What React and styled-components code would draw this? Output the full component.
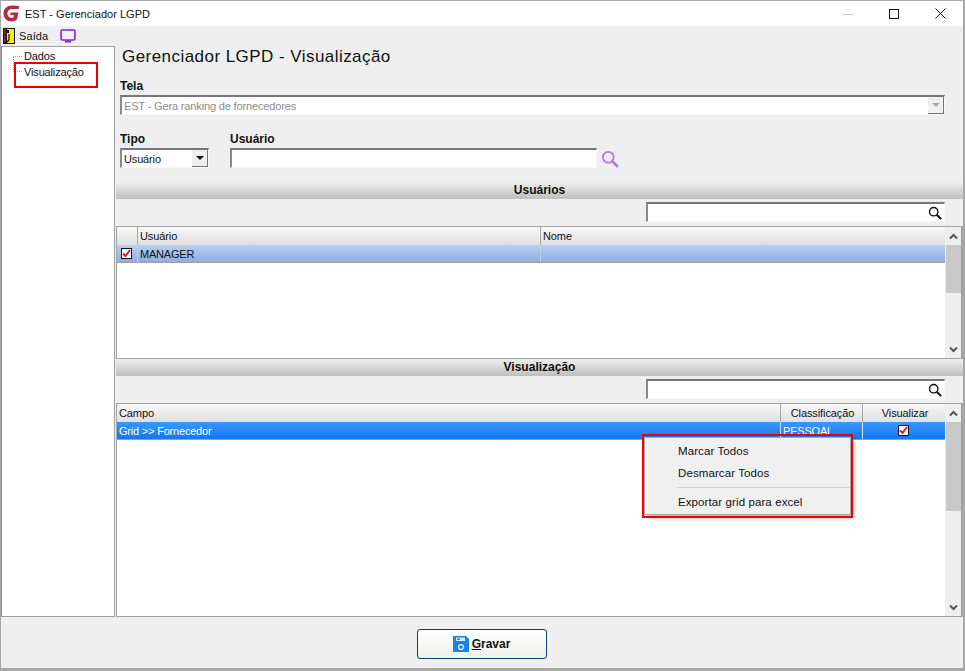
import React from "react";
import styled, { createGlobalStyle } from "styled-components";

const GlobalStyle = createGlobalStyle`
  html, body {
    margin: 0;
    padding: 0;
    background: #efefef;
  }
  * { box-sizing: border-box; }
`;

const Window = styled.div`
  position: relative;
  width: 965px;
  height: 671px;
  overflow: hidden;
  display: flex;
  flex-direction: column;
  background: #efefef;
  border-top: 1px solid #a8a8a8;
  border-left: 1px solid #a8a8a8;
  border-right: 2px solid #a8a8a8;
  border-bottom: 3px solid #a8a8a8;
  font-family: "Liberation Sans", Arial, sans-serif;
  font-size: 11px;
  color: #111;
`;

const TitleBar = styled.div`
  height: 25px;
  flex: none;
  display: flex;
  align-items: center;
  background: #fff;
  padding-left: 2px;
  font-size: 11px;
`;

const TitleText = styled.span`
  margin-left: 5px;
  flex: 1;
  letter-spacing: 0.02px;
`;

const WinButtons = styled.div`
  display: flex;
  align-items: center;
`;

const WinButton = styled.div`
  width: 46px;
  height: 25px;
  display: flex;
  align-items: center;
  justify-content: center;
`;

const ToolBar = styled.div`
  height: 20px;
  flex: none;
  display: flex;
  align-items: center;
  padding-left: 2px;
  font-size: 11px;
`;

const ToolLabel = styled.span`
  margin-left: 4px;
  margin-right: 12px;
  letter-spacing: 0.1px;
`;

const Main = styled.div`
  flex: 1;
  display: flex;
  min-height: 0;
`;

const Tree = styled.div`
  position: relative;
  width: 114px;
  flex: none;
  background: #fff;
  border: 1px solid #a0a0a0;
  border-left-color: #8a8a8a;
  padding: 1px 0 0 22px;
  font-size: 11px;
  letter-spacing: -0.15px;
`;

const TreeLines = styled.div`
  position: absolute;
  left: 11px;
  top: 9px;
  width: 9px;
  height: 16px;
  border-left: 1px dotted #aaa;
  border-top: 1px dotted #aaa;
  border-bottom: 1px dotted #aaa;
`;

const TreeItem = styled.div`
  height: 16px;
  line-height: 16px;
`;

const Content = styled.div`
  flex: 1;
  min-width: 0;
  display: flex;
  flex-direction: column;
  padding: 1px 0 0 1px;
`;

const Heading = styled.h1`
  margin: 0;
  padding: 0 0 0 6px;
  height: 20px;
  line-height: 20px;
  font-size: 17px;
  font-weight: 400;
  letter-spacing: 0.45px;
  color: #111;
`;

const Fields = styled.div`
  padding: 12px 18px 0 4px;
  display: flex;
  flex-direction: column;
`;

const Label = styled.div`
  font-weight: 700;
  font-size: 12px;
  line-height: 14px;
  height: 14px;
  margin-bottom: 2px;
`;

const FieldRow = styled.div`
  display: flex;
  gap: 21px;
  margin-top: 17px;
`;

const Sunken = styled.div`
  display: flex;
  align-items: center;
  background: #fff;
  border-top: 2px solid #777;
  border-left: 2px solid #8a8a8a;
  border-right: 1px solid #f8f8f8;
  border-bottom: 1px solid #f8f8f8;
  width: ${(p) => p.$w || "auto"};
  height: 20px;
  padding-left: 2px;
  font-size: 11px;
  letter-spacing: -0.15px;
  color: ${(p) => (p.$disabled ? "#8a8a8a" : "#111")};
`;

const SunkenText = styled.span`
  flex: 1;
  white-space: nowrap;
`;

const DropButton = styled.div`
  width: 16px;
  height: 17px;
  background: #efefef;
  border-right: 1px solid #777;
  border-bottom: 1px solid #777;
  display: flex;
  align-items: center;
  justify-content: center;
`;

const Arrow = styled.div`
  width: 0;
  height: 0;
  border-left: 4px solid transparent;
  border-right: 4px solid transparent;
  border-top: 4px solid ${(p) => p.$color};
`;

const SearchRow = styled.div`
  display: flex;
  align-items: flex-end;
  gap: 4px;
`;

const Section = styled.div`
  height: 17px;
  flex: none;
  background: linear-gradient(#efefef, #bfbfbf);
  text-align: center;
  font-weight: 700;
  font-size: 12px;
  line-height: 17px;
  margin-top: ${(p) => p.$mt || 0}px;
`;

const FilterRow = styled.div`
  display: flex;
  justify-content: flex-end;
  padding: 3px 18px 4px 0;
  flex: none;
`;

const FilterBox = styled(Sunken)`
  width: 299px;
  justify-content: flex-end;
  padding-right: 2px;
`;

const Grid = styled.div`
  display: flex;
  flex: ${(p) => (p.$grow ? 1 : "none")};
  height: ${(p) => (p.$h ? `${p.$h}px` : "auto")};
  min-height: 0;
  background: #fff;
  border: 1px solid #a0a0a0;
  border-right-width: 2px;
`;

const GridBody = styled.div`
  flex: 1;
  min-width: 0;
`;

const Row = styled.div`
  display: grid;
  grid-template-columns: ${(p) => p.$cols};
  height: 18px;
  border-bottom: 1px solid #a0a0a0;
`;

const HeadCell = styled.div`
  background: linear-gradient(#f8f8f8, #dedede);
  border-right: 1px solid #a8a8a8;
  padding-left: 2px;
  line-height: 19px;
  font-size: 11px;
  letter-spacing: -0.1px;
  text-align: ${(p) => p.$align || "left"};
  &:last-child { border-right: none; }
`;

const Cell = styled.div`
  display: flex;
  align-items: center;
  justify-content: ${(p) => (p.$center ? "center" : "flex-start")};
  padding: ${(p) => (p.$center ? "0 1px 0 0" : "0 0 0 2px")};
  font-size: 11px;
  white-space: nowrap;
  letter-spacing: -0.2px;
  border-right: 1px solid ${(p) => (p.$selected ? "#cfe2ff" : "#c4d0e6")};
  color: ${(p) => (p.$selected ? "#fff" : "#111")};
  background: ${(p) =>
    p.$selected ? "linear-gradient(#3c97ff, #0f78f2)" : "linear-gradient(#b8cff0, #8fade6)"};
  &:last-child { border-right: none; }
`;

const CheckBox = styled.div`
  width: 11px;
  height: 11px;
  background: #fff;
  border: 1px solid #111;
  display: flex;
  align-items: center;
  justify-content: center;
`;

const ScrollBar = styled.div`
  width: 16px;
  flex: none;
  display: flex;
  flex-direction: column;
  background: #efefef;
`;

const ScrollButton = styled.div`
  height: 18px;
  flex: none;
  display: flex;
  align-items: center;
  justify-content: center;
`;

const ScrollTrack = styled.div`
  flex: 1;
  min-height: 0;
`;

const ScrollThumb = styled.div`
  height: ${(p) => p.$h}px;
  background: #c9c9c9;
  margin-left: 1px;
`;

const Footer = styled.div`
  height: 51px;
  flex: none;
  display: flex;
  align-items: center;
  justify-content: center;
  padding-top: 3px;
  padding-right: 1px;
`;

const SaveButton = styled.button`
  width: 130px;
  height: 30px;
  display: flex;
  align-items: center;
  justify-content: center;
  gap: 3px;
  background: linear-gradient(#ffffff, #f1efec);
  border: 1px solid #0b3f78;
  border-radius: 3px;
  font-family: "Liberation Sans", Arial, sans-serif;
  font-size: 12px;
  font-weight: 700;
  color: #111;
  padding: 0;
`;

const Underlined = styled.span`
  text-decoration: underline;
`;

const Menu = styled.div`
  position: absolute;
  left: 643px;
  top: 436px;
  width: 207px;
  height: 78px;
  background: #f0f0f0;
  border: 1px solid #a8a8a8;
  box-shadow: 3px 3px 4px rgba(0, 0, 0, 0.3);
  padding: 2px 0 0 33px;
  font-size: 11.5px;
  color: #111;
`;

const MenuItem = styled.div`
  height: 22px;
  line-height: 22px;
  letter-spacing: 0.1px;
`;

const MenuDivider = styled.div`
  height: 1px;
  background: #d4d4d4;
  margin: 3px 0 3px -1px;
`;

const Annotation = styled.div`
  position: absolute;
  left: ${(p) => p.$x}px;
  top: ${(p) => p.$y}px;
  width: ${(p) => p.$w}px;
  height: ${(p) => p.$h}px;
  border: 2px solid #f00000;
`;

const Logo = () => (
  <svg width="17" height="17" viewBox="0 0 17 17">
    <path
      d="M9 0.5 C4 0.5 0.5 4 0.5 8.5 C0.5 13 4 16.5 8.5 16.5 C10.5 16.5 12.5 15.8 14 14.5 L15.5 7.5 L8 7.5 L7 10 L11 10 L10.4 12.6 C9.8 12.9 9.2 13 8.6 13 C6 13 4.4 11 4.4 8.6 C4.4 6 6.5 4 9.2 4 L15.6 4 L16.5 1.6 C14.5 0.8 12 0.5 9 0.5 Z"
      fill="#b52a3f"
    />
  </svg>
);

const ExitIcon = () => (
  <svg width="12" height="16" viewBox="0 0 12 16">
    <rect width="12" height="16" fill="#111" />
    <rect x="4" y="1" width="7" height="14" fill="#f8ee00" />
    <rect x="1" y="1" width="2" height="13" fill="#8c1c1c" />
    <rect x="4" y="2" width="2" height="3" fill="#111" />
    <path d="M6 6v6M6 12l-2 2" stroke="#111" strokeWidth="1.2" fill="none" />
  </svg>
);

const MonitorIcon = () => (
  <svg width="16" height="14" viewBox="0 0 16 14">
    <rect x="1" y="1" width="14" height="10" rx="1.5" fill="#f4f0f8" stroke="#8420e0" strokeWidth="1.6" />
    <rect x="5" y="11.5" width="6" height="2" fill="#8420e0" />
  </svg>
);

const Minimize = () => (
  <svg width="10" height="10" viewBox="0 0 10 10">
    <path d="M0 5.5h10" stroke="#c8c8c8" />
  </svg>
);

const Maximize = () => (
  <svg width="10" height="10" viewBox="0 0 10 10">
    <rect x="0.5" y="0.5" width="9" height="9" fill="none" stroke="#111" />
  </svg>
);

const CloseIcon = () => (
  <svg width="11" height="11" viewBox="0 0 11 11">
    <path d="M0.5 0.5l10 10M10.5 0.5l-10 10" stroke="#111" fill="none" />
  </svg>
);

const SearchIcon = ({ color, size }) => (
  <svg width={size} height={size} viewBox="0 0 16 16">
    <circle cx="6.5" cy="6.5" r="4.8" fill="none" stroke={color} strokeWidth="1.6" />
    <path d="M10 10l5 5" stroke={color} strokeWidth="2.4" />
  </svg>
);

const Chevron = ({ up }) => (
  <svg width="9" height="7" viewBox="0 0 9 7">
    <path d={up ? "M1 5.5l3.5-3.5 3.5 3.5" : "M1 1.5l3.5 3.5 3.5-3.5"} fill="none" stroke="#555" strokeWidth="2" />
  </svg>
);

const Check = () => (
  <svg width="9" height="9" viewBox="0 0 9 9">
    <path d="M1 4.5l2.5 2.5 4.5-6" fill="none" stroke="#e8101c" strokeWidth="2" />
  </svg>
);

const DiskIcon = () => (
  <svg width="16" height="16" viewBox="0 0 16 16">
    <path d="M0 0h13l3 3v13H0z" fill="#1187e8" />
    <rect x="3" y="1.5" width="9" height="3.5" fill="#d7ecfb" />
    <rect x="4" y="2.5" width="3" height="1.5" fill="#1187e8" />
    <circle cx="8" cy="11" r="2.4" fill="none" stroke="#d7ecfb" strokeWidth="1.4" />
  </svg>
);

const Scroll = ({ thumb }) => (
  <ScrollBar>
    <ScrollButton><Chevron up /></ScrollButton>
    <ScrollTrack><ScrollThumb $h={thumb} /></ScrollTrack>
    <ScrollButton><Chevron /></ScrollButton>
  </ScrollBar>
);

const userCols = "21px 403px 1fr";
const fieldCols = "664px 82px 1fr";

export default function App() {
  return (
    <>
      <GlobalStyle />
      <Window>
        <TitleBar>
          <Logo />
          <TitleText>EST - Gerenciador LGPD</TitleText>
          <WinButtons>
            <WinButton><Minimize /></WinButton>
            <WinButton><Maximize /></WinButton>
            <WinButton><CloseIcon /></WinButton>
          </WinButtons>
        </TitleBar>
        <ToolBar>
          <ExitIcon />
          <ToolLabel>Saída</ToolLabel>
          <MonitorIcon />
        </ToolBar>
        <Main>
          <Tree>
            <TreeLines />
            <TreeItem>Dados</TreeItem>
            <TreeItem>Visualização</TreeItem>
          </Tree>
          <Content>
            <Heading>Gerenciador LGPD - Visualização</Heading>
            <Fields>
              <Label>Tela</Label>
              <Sunken $disabled>
                <SunkenText>EST - Gera ranking de fornecedores</SunkenText>
                <DropButton><Arrow $color="#a8a8a8" /></DropButton>
              </Sunken>
              <FieldRow>
                <div>
                  <Label>Tipo</Label>
                  <Sunken $w="89px">
                    <SunkenText>Usuário</SunkenText>
                    <DropButton><Arrow $color="#111" /></DropButton>
                  </Sunken>
                </div>
                <SearchRow>
                  <div>
                    <Label>Usuário</Label>
                    <Sunken $w="367px" />
                  </div>
                  <SearchIcon color="#b678e0" size={18} />
                </SearchRow>
              </FieldRow>
            </Fields>
            <Section $mt={14}>Usuários</Section>
            <FilterRow>
              <FilterBox><SearchIcon color="#111" size={14} /></FilterBox>
            </FilterRow>
            <Grid $h={133}>
              <GridBody>
                <Row $cols={userCols}>
                  <HeadCell />
                  <HeadCell>Usuário</HeadCell>
                  <HeadCell>Nome</HeadCell>
                </Row>
                <Row $cols={userCols}>
                  <Cell $center><CheckBox><Check /></CheckBox></Cell>
                  <Cell>MANAGER</Cell>
                  <Cell />
                </Row>
              </GridBody>
              <Scroll thumb={48} />
            </Grid>
            <Section>Visualização</Section>
            <FilterRow>
              <FilterBox><SearchIcon color="#111" size={14} /></FilterBox>
            </FilterRow>
            <Grid $grow>
              <GridBody>
                <Row $cols={fieldCols}>
                  <HeadCell>Campo</HeadCell>
                  <HeadCell $align="center">Classificação</HeadCell>
                  <HeadCell $align="center">Visualizar</HeadCell>
                </Row>
                <Row $cols={fieldCols}>
                  <Cell $selected>Grid &gt;&gt; Fornecedor</Cell>
                  <Cell $selected>PESSOAL</Cell>
                  <Cell $selected $center><CheckBox><Check /></CheckBox></Cell>
                </Row>
              </GridBody>
              <Scroll thumb={89} />
            </Grid>
          </Content>
        </Main>
        <Footer>
          <SaveButton>
            <DiskIcon />
            <span><Underlined>G</Underlined>ravar</span>
          </SaveButton>
        </Footer>
        <Menu>
          <MenuItem>Marcar Todos</MenuItem>
          <MenuItem>Desmarcar Todos</MenuItem>
          <MenuDivider />
          <MenuItem>Exportar grid para excel</MenuItem>
        </Menu>
        <Annotation $x={13} $y={61} $w={84} $h={26} />
        <Annotation $x={641} $y={433} $w={211} $h={84} />
      </Window>
    </>
  );
}
